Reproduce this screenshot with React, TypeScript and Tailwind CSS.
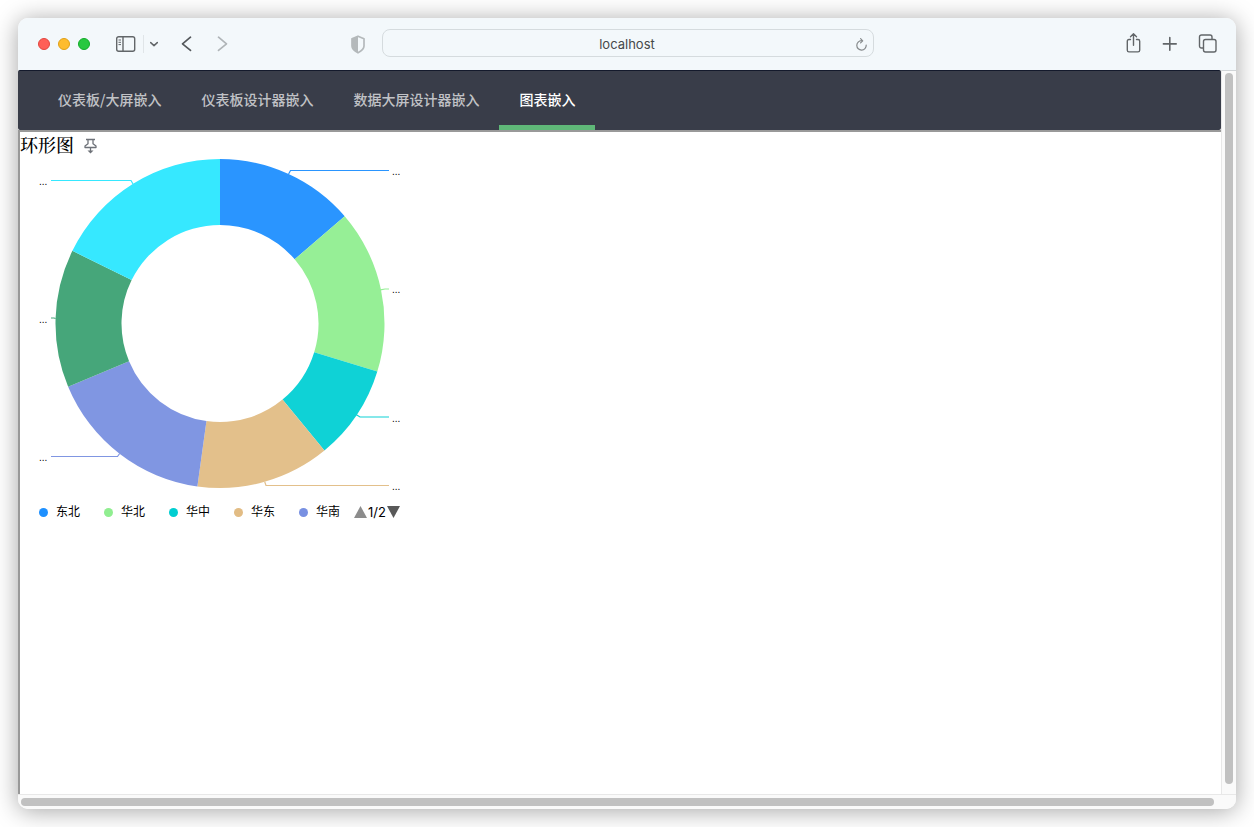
import React from "react";

const CENTER_X = 220;
const CENTER_Y = 323.5;
const OUTER = 164.5;
const INNER = 98.5;

type Slice = { from: number; to: number; color: string; leader: string; labelX: number; labelY: number };

const slices: Slice[] = [
  { from: 0, to: 49.3, color: "#2a95ff", leader: "M288.6 174 L290.5 170.5 H389", labelX: 392, labelY: 175 },
  { from: 49.3, to: 107, color: "#96ef96", leader: "M380.5 289.8 L385 289 H389", labelX: 392, labelY: 293 },
  { from: 107, to: 140.6, color: "#0fd2d6", leader: "M356 414.5 L360 417 H389", labelX: 392, labelY: 422 },
  { from: 140.6, to: 187.9, color: "#e3c08b", leader: "M264.7 481.8 L266 485.5 H389", labelX: 392, labelY: 490 },
  { from: 187.9, to: 247.4, color: "#8096e2", leader: "M119.7 453.5 L117.5 456.5 H51", labelX: 39, labelY: 461 },
  { from: 247.4, to: 296.2, color: "#46a67a", leader: "M55.6 318.5 L54 318 H51", labelX: 39, labelY: 323 },
  { from: 296.2, to: 360, color: "#36e8ff", leader: "M133 184 L131 180.5 H51", labelX: 39, labelY: 185 },
];

const legend = [
  { name: "东北", dot: "bg-[#1e90ff]" },
  { name: "华北", dot: "bg-[#90ee90]" },
  { name: "华中", dot: "bg-[#00ced1]" },
  { name: "华东", dot: "bg-[#e2bc84]" },
  { name: "华南", dot: "bg-[#7890e2]" },
];

const tabs = ["仪表板/大屏嵌入", "仪表板设计器嵌入", "数据大屏设计器嵌入", "图表嵌入"];

function point(angle: number, radius: number) {
  const a = (angle * Math.PI) / 180;
  return `${CENTER_X + radius * Math.sin(a)} ${CENTER_Y - radius * Math.cos(a)}`;
}

function ringPath({ from, to }: Slice) {
  return `M${point(from, OUTER)} A${OUTER} ${OUTER} 0 0 1 ${point(to, OUTER)} L${point(to, INNER)} A${INNER} ${INNER} 0 0 0 ${point(from, INNER)} Z`;
}

function Toolbar() {
  return (
    <header className="flex h-13 shrink-0 items-center bg-[#f3f8fb] text-[#626669]">
      <div className="flex flex-1 items-center pl-5">
        <div className="flex gap-2">
          <button aria-label="关闭" className="size-3 rounded-full border border-[#e2463f] bg-[#ff5f57]" />
          <button aria-label="最小化" className="size-3 rounded-full border border-[#e1a116] bg-[#febc2e]" />
          <button aria-label="缩放" className="size-3 rounded-full border border-[#12ac28] bg-[#28c840]" />
        </div>
        <button aria-label="边栏" className="ml-6">
          <svg width="22" height="18" viewBox="0 0 22 18" fill="none" stroke="currentColor" strokeWidth="1.4">
            <rect x="2.7" y="1.7" width="18" height="14.6" rx="2" />
            <path d="M9 1.7v14.6" />
            <path d="M4.5 5h2.5M4.5 7.3h2.5M4.5 9.6h2.5" strokeWidth="1" />
          </svg>
        </button>
        <span className="ml-[7px] h-4.5 w-px bg-[#e0e5e8]" />
        <button aria-label="边栏选项" className="ml-1">
          <svg width="12" height="12" viewBox="0 0 12 12" fill="none" stroke="currentColor" strokeWidth="1.5" strokeLinecap="round" strokeLinejoin="round">
            <path d="M2.7 4.6 6 7.6l3.3-3" />
          </svg>
        </button>
        <button aria-label="后退" className="ml-[18px]">
          <svg width="16" height="18" viewBox="0 0 16 18" fill="none" stroke="#55595c" strokeWidth="1.7" strokeLinecap="round" strokeLinejoin="round">
            <path d="M12.5 2.2 4.5 8.8l8 6.6" />
          </svg>
        </button>
        <button aria-label="前进" className="ml-5">
          <svg width="16" height="18" viewBox="0 0 16 18" fill="none" stroke="#b0b5b8" strokeWidth="1.7" strokeLinecap="round" strokeLinejoin="round">
            <path d="M4.5 2.2l8 6.6-8 6.6" />
          </svg>
        </button>
        <button aria-label="隐私报告" className="mr-4 ml-auto">
          <svg width="16" height="19" viewBox="0 0 16 19">
            <path d="M8 1.2 14 3.7V11c0 2.7-2.7 5-6 6.8C4.7 16 2 13.7 2 11V3.7z" fill="none" stroke="#b4b9bb" strokeWidth="1.7" strokeLinejoin="round" />
            <path d="M8 1.2v16.6C4.7 16 2 13.7 2 11V3.7z" fill="#b4b9bb" />
          </svg>
        </button>
      </div>
      <div className="mb-0.5 flex h-7 w-[492px] items-center rounded-lg border border-[#d5dbde] pr-1">
        <input
          aria-label="地址"
          defaultValue="localhost"
          className="h-full min-w-0 flex-1 bg-transparent pt-0.5 pl-4 text-center font-[Inter,sans-serif] text-[13px] leading-5 text-[#45484a] outline-none"
        />
        <button aria-label="重新载入" className="pt-1">
          <svg width="14" height="14" viewBox="0 0 14 14" fill="none" stroke="#85898b" strokeWidth="1.2" strokeLinecap="round" strokeLinejoin="round">
            <path d="M6.5 2.7A4.7 4.7 0 1 0 11.200 7.200" />
            <path d="M5.6.7 7.700 2.800 5.600 4.900" />
          </svg>
        </button>
      </div>
      <div className="flex flex-1 items-center justify-end gap-3.5 pr-[18px]">
        <button aria-label="分享" className="pb-0.5">
          <svg width="20" height="22" viewBox="0 0 20 22" fill="none" stroke="currentColor" strokeWidth="1.4" strokeLinecap="round" strokeLinejoin="round">
            <path d="M6.5 7.5H5c-1.1 0-1.7.6-1.7 1.7v9c0 1.1.6 1.7 1.7 1.7h9c1.1 0 1.7-.6 1.7-1.7v-9c0-1.1-.6-1.7-1.7-1.7h-1.5M9.5 13.2V1.8M6.5 4.7l3-3 3 3" />
          </svg>
        </button>
        <button aria-label="新标签页" className="ml-1">
          <svg width="16" height="16" viewBox="0 0 16 16" fill="none" stroke="currentColor" strokeWidth="1.6" strokeLinecap="round">
            <path d="M7.8 1.5v12.8M1.4 7.9h12.800" />
          </svg>
        </button>
        <button aria-label="标签页概览" className="ml-1.5">
          <svg width="20" height="20" viewBox="0 0 20 20" fill="none" stroke="currentColor" strokeWidth="1.4" strokeLinejoin="round">
            <rect x="5.5" y="5.5" width="12.5" height="12.5" rx="2" />
            <path d="M5.5 14H3.5c-1.2 0-2-.8-2-2V3c0-1.2.8-2 2-2H12c1.2 0 2 .8 2 2v2.5" />
          </svg>
        </button>
      </div>
    </header>
  );
}

function Chart() {
  return (
    <section className="w-[400px] text-black">
      <div className="flex h-6 items-center gap-2.5 pt-1">
        <h1 className="font-['Liberation_Serif','Noto_Serif_CJK_SC','Noto_Sans_CJK_SC',serif] text-lg leading-6 font-medium">环形图</h1>
        <button aria-label="固定">
          <svg width="14" height="16" viewBox="0 0 14 16" fill="none" stroke="#6e7279" strokeWidth="1.3" strokeLinejoin="round">
            <path d="M2 1.500h9M4 1.500v4.200L1 8v1.500h11V8L9 5.700V1.500M6.500 9.500v4" />
            <path d="M3.500 12.500h6L6.500 15.500z" fill="#6e7279" stroke="none" />
          </svg>
        </button>
      </div>
      <svg width="400" height="340" viewBox="20 156 400 340" role="img" aria-label="环形图">
        {slices.map((s) => (
          <g key={s.from}>
            <path d={ringPath(s)} fill={s.color} />
            <path d={s.leader} fill="none" stroke={s.color} strokeWidth="1.2" />
            <text x={s.labelX} y={s.labelY} className="fill-black font-['Liberation_Sans',sans-serif] text-[10px]">
              ...
            </text>
          </g>
        ))}
      </svg>
      <div className="flex h-8 items-center pl-[19px] font-['Liberation_Sans','Noto_Sans_CJK_SC',sans-serif] text-xs">
        <ul className="flex gap-6">
          {legend.map((item) => (
            <li key={item.name} className="flex items-center gap-2">
              <span className={`size-[9px] rounded-full ${item.dot}`} />
              {item.name}
            </li>
          ))}
        </ul>
        <div className="ml-3.5 flex items-center gap-px font-[Inter,sans-serif] text-[13px] leading-4">
          <button aria-label="上一页">
            <svg width="13" height="12" viewBox="0 0 13 12"><path d="M6.5 0 13 12H0z" fill="#8c8c8c" /></svg>
          </button>
          <span>1/2</span>
          <button aria-label="下一页">
            <svg width="13" height="12" viewBox="0 0 13 12"><path d="M0 0h13L6.5 12z" fill="#595959" /></svg>
          </button>
        </div>
      </div>
    </section>
  );
}

export default function App() {
  return (
    <div className="flex min-h-screen bg-white p-[18px]">
      <div className="flex min-w-0 flex-1 flex-col overflow-hidden rounded-[10px] bg-white shadow-[0_2px_24px_rgba(0,0,0,0.36)]">
        <Toolbar />
        <div className="flex flex-1">
          <div className="flex min-w-0 flex-1 flex-col">
            <nav className="flex h-15 rounded-xs border-t border-[#141a2c] bg-[#393d49] px-5 font-['Noto_Sans_CJK_SC',sans-serif] text-sm font-medium">
              {tabs.map((tab, i) => (
                <a
                  key={tab}
                  href="#"
                  aria-current={i === 3 ? "page" : undefined}
                  className={
                    i === 3
                      ? "flex items-center border-b-5 border-[#5fb878] px-5 pt-0.5 text-white"
                      : "flex items-center border-b-5 border-transparent px-5 pt-0.5 text-white/70"
                  }
                >
                  {tab}
                </a>
              ))}
            </nav>
            <main className="flex-1 border-t-2 border-l-2 border-[#999]">
              <Chart />
            </main>
          </div>
          <div className="flex w-[15px] flex-col border-t border-l border-t-[#d0d4d7] border-l-[#e8e8e8] bg-[#fafafa] px-[3px] pt-0.5 pb-2.5">
            <div className="w-2 flex-1 rounded-full bg-[#c1c1c1]" />
          </div>
        </div>
        <div className="h-[15px] shrink-0 border-t border-[#e8e8e8] bg-[#fafafa] pt-[3px] pr-[22px] pl-[3px]">
          <div className="h-2 rounded-full bg-[#c1c1c1]" />
        </div>
      </div>
    </div>
  );
}
